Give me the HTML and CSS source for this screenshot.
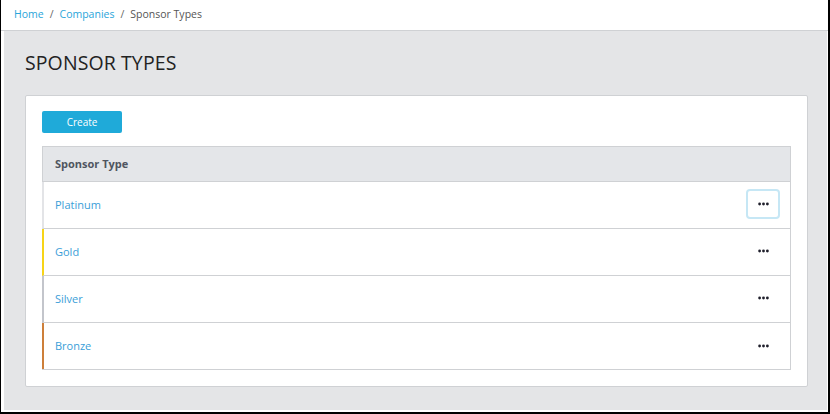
FILE: index.html
```html
<!DOCTYPE html>
<html>
<head>
<meta charset="utf-8">
<link rel="stylesheet" href="styles.css">
</head>
<body>
<div class="frame">
  <div class="topbar">
    <nav class="crumbs">
      <a class="crumb-link">Home</a><span class="sep">/</span><a class="crumb-link">Companies</a><span class="sep">/</span><span class="crumb-current">Sponsor Types</span>
    </nav>
  </div>
  <main class="main">
    <h1 class="title">SPONSOR TYPES</h1>
    <section class="card">
      <button class="btn-create">Create</button>
      <div class="table">
        <div class="thead">Sponsor Type</div>
        <div class="row row-platinum">
          <a class="name">Platinum</a>
          <button class="more focused"><svg width="11" height="4" viewBox="0 0 11 4"><circle cx="1.6" cy="2" r="1.4"/><circle cx="5.5" cy="2" r="1.4"/><circle cx="9.4" cy="2" r="1.4"/></svg></button>
        </div>
        <div class="row row-gold">
          <a class="name">Gold</a>
          <button class="more"><svg width="11" height="4" viewBox="0 0 11 4"><circle cx="1.6" cy="2" r="1.4"/><circle cx="5.5" cy="2" r="1.4"/><circle cx="9.4" cy="2" r="1.4"/></svg></button>
        </div>
        <div class="row row-silver">
          <a class="name">Silver</a>
          <button class="more"><svg width="11" height="4" viewBox="0 0 11 4"><circle cx="1.6" cy="2" r="1.4"/><circle cx="5.5" cy="2" r="1.4"/><circle cx="9.4" cy="2" r="1.4"/></svg></button>
        </div>
        <div class="row row-bronze">
          <a class="name">Bronze</a>
          <button class="more"><svg width="11" height="4" viewBox="0 0 11 4"><circle cx="1.6" cy="2" r="1.4"/><circle cx="5.5" cy="2" r="1.4"/><circle cx="9.4" cy="2" r="1.4"/></svg></button>
        </div>
      </div>
    </section>
  </main>
</div>
</body>
</html>
```
FILE: styles.css
```css
* { box-sizing: border-box; }
html, body { margin: 0; padding: 0; }
body {
  font-family: "Open Sans", "Liberation Sans", sans-serif;
  background: #fff;
}
.frame {
  width: 830px;
  height: 414px;
  border-left: 1px solid #000;
  border-right: 2px solid #000;
  border-bottom: 2px solid #000;
  display: flex;
  flex-direction: column;
  background: #fff;
}
.topbar {
  height: 31px;
  border-bottom: 1px solid #cfd1d4;
  display: flex;
  align-items: center;
  padding-left: 13px;
  padding-bottom: 2px;
}
.crumbs {
  font-size: 10.5px;
  color: #555;
  display: flex;
  align-items: center;
}
.crumb-link { color: #2aa5da; }
.sep { margin: 0 6px; color: #666; }
.crumb-current { color: #555; }
.main {
  flex: 1;
  margin: 0 1px 2px 3px;
  background: #e4e5e7;
  padding: 20px 19px 0 21px;
}
.title {
  margin: 0;
  font-size: 19.5px;
  line-height: 24px;
  font-weight: 400;
  color: #222;
  letter-spacing: 0.1px;
}
.card {
  margin-top: 20px;
  background: #fff;
  border: 1px solid #cfd1d4;
  border-radius: 2px;
  padding: 15px 16px 16px 16px;
}
.btn-create {
  display: block;
  width: 80px;
  height: 22px;
  border: 0;
  border-radius: 2px;
  background: #1faad9;
  color: #fff;
  font-family: inherit;
  font-size: 10px;
  padding: 0;
}
.table {
  margin-top: 13px;
  border: 1px solid #cfd1d4;
  border-top: 0;
}
.thead {
  height: 36px;
  background: #e4e6e9;
  border-top: 1px solid #cfd1d4;
  border-bottom: 1px solid #cfd1d4;
  display: flex;
  align-items: center;
  padding: 0 0 1px 12px;
  font-size: 11px;
  font-weight: 700;
  color: #4f5560;
}
.row {
  height: 47px;
  border-bottom: 1px solid #cfd1d4;
  border-left: 2px solid #e0e1e4;
  margin-left: -1px;
  display: flex;
  align-items: center;
  justify-content: space-between;
  padding: 0 10px 2px 11px;
}
.row:last-child { border-bottom: 0; height: 46px; padding-bottom: 1px; }
.row-platinum { border-left-color: #e3e4e7; }
.row-gold { border-left-color: #f7d417; }
.row-silver { border-left-color: #c3c5cb; }
.row-bronze { border-left-color: #cd7f3a; }
.name {
  font-size: 11px;
  color: #3a9ed8;
}
.more {
  width: 34px;
  height: 30px;
  border: 2px solid transparent;
  border-radius: 4px;
  background: #fff;
  padding: 0;
  display: flex;
  align-items: center;
  justify-content: center;
}
.more svg { fill: #1e1e2a; display: block; }
.more.focused { border-color: #c6e7f5; }
```
